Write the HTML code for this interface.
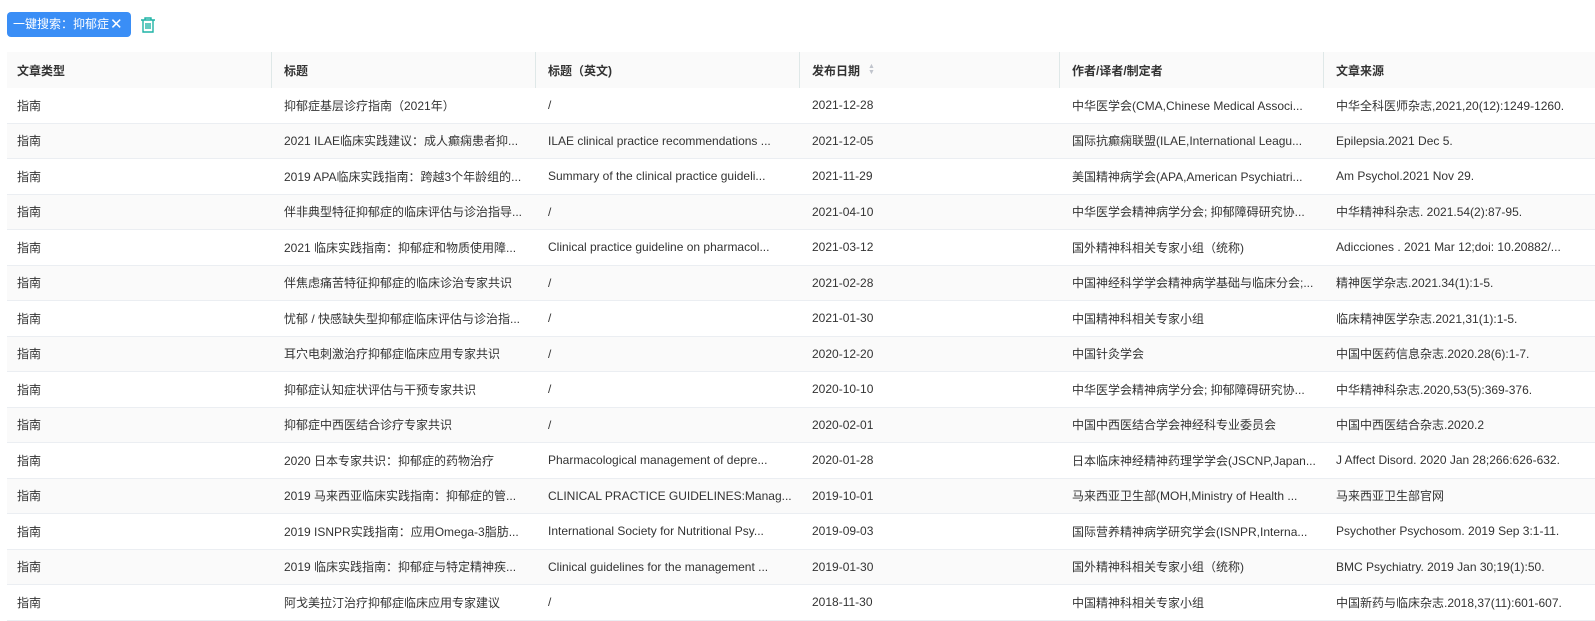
<!DOCTYPE html>
<html><head><meta charset="utf-8"><style>
body{margin:0;background:#fff;font-family:"Liberation Sans","Noto Sans CJK SC",sans-serif;font-size:12px;color:#333;width:1595px;height:621px;overflow:hidden;position:relative}
.tag{position:absolute;left:7px;top:12px;width:124px;height:25px;background:#3a8ef6;border-radius:4px;color:#fff;font-size:12px;line-height:25px;padding-left:6px;box-sizing:border-box}
.tag b{font-weight:normal;font-size:15px;position:absolute;left:103px;top:0}
.trash{position:absolute;left:140px;top:16px}
.tbl{position:absolute;left:7px;top:52px;width:1620px}
.r{display:flex;height:35.5px;box-sizing:border-box;border-bottom:1px solid #ebeef2;align-items:center}
.r:nth-child(odd){background:#fafafa}
.h{height:36px;background:#e8f0f0;border-bottom:none;font-weight:bold;align-items:stretch}
.h>div{border-right:1px solid #dfe8e8;display:flex;align-items:center}
.r>div{box-sizing:border-box;padding-left:12px;white-space:nowrap;overflow:hidden;flex:none}
.r>div:nth-child(1){width:265px;padding-left:10px}
.r>div:nth-child(2){width:264px}
.r>div:nth-child(3){width:264px}
.r>div:nth-child(4){width:260px}
.r>div:nth-child(5){width:264px}
.r>div:nth-child(6){width:303px}
.sort{display:inline-block;vertical-align:middle;margin-left:8px;color:#c0c4cc;font-size:7px;line-height:6px;font-weight:normal}
</style></head><body>
<div class="tag">一键搜索：抑郁症<b>✕</b></div>
<svg class="trash" width="16" height="18" viewBox="0 0 16 18" fill="none" stroke="#1fb3a6" stroke-width="1.4"><path d="M1 4h14M5 4V2h6v2M3 4v12h10V4M6 7v6M8 7v6M10 7v6"/></svg>
<div class="tbl">
<div class="r h"><div>文章类型</div><div>标题</div><div>标题（英文)</div><div>发布日期<span class="sort">▲<br>▼</span></div><div>作者/译者/制定者</div><div>文章来源</div></div>
<div class="r"><div>指南</div><div>抑郁症基层诊疗指南（2021年）</div><div>/</div><div>2021-12-28</div><div>中华医学会(CMA,Chinese Medical Associ...</div><div>中华全科医师杂志,2021,20(12):1249-1260.</div></div>
<div class="r"><div>指南</div><div>2021 ILAE临床实践建议：成人癫痫患者抑...</div><div>ILAE clinical practice recommendations ...</div><div>2021-12-05</div><div>国际抗癫痫联盟(ILAE,International Leagu...</div><div>Epilepsia.2021 Dec 5.</div></div>
<div class="r"><div>指南</div><div>2019 APA临床实践指南：跨越3个年龄组的...</div><div>Summary of the clinical practice guideli...</div><div>2021-11-29</div><div>美国精神病学会(APA,American Psychiatri...</div><div>Am Psychol.2021 Nov 29.</div></div>
<div class="r"><div>指南</div><div>伴非典型特征抑郁症的临床评估与诊治指导...</div><div>/</div><div>2021-04-10</div><div>中华医学会精神病学分会; 抑郁障碍研究协...</div><div>中华精神科杂志. 2021.54(2):87-95.</div></div>
<div class="r"><div>指南</div><div>2021 临床实践指南：抑郁症和物质使用障...</div><div>Clinical practice guideline on pharmacol...</div><div>2021-03-12</div><div>国外精神科相关专家小组（统称)</div><div>Adicciones . 2021 Mar 12;doi: 10.20882/...</div></div>
<div class="r"><div>指南</div><div>伴焦虑痛苦特征抑郁症的临床诊治专家共识</div><div>/</div><div>2021-02-28</div><div>中国神经科学学会精神病学基础与临床分会;...</div><div>精神医学杂志.2021.34(1):1-5.</div></div>
<div class="r"><div>指南</div><div>忧郁 / 快感缺失型抑郁症临床评估与诊治指...</div><div>/</div><div>2021-01-30</div><div>中国精神科相关专家小组</div><div>临床精神医学杂志.2021,31(1):1-5.</div></div>
<div class="r"><div>指南</div><div>耳穴电刺激治疗抑郁症临床应用专家共识</div><div>/</div><div>2020-12-20</div><div>中国针灸学会</div><div>中国中医药信息杂志.2020.28(6):1-7.</div></div>
<div class="r"><div>指南</div><div>抑郁症认知症状评估与干预专家共识</div><div>/</div><div>2020-10-10</div><div>中华医学会精神病学分会; 抑郁障碍研究协...</div><div>中华精神科杂志.2020,53(5):369-376.</div></div>
<div class="r"><div>指南</div><div>抑郁症中西医结合诊疗专家共识</div><div>/</div><div>2020-02-01</div><div>中国中西医结合学会神经科专业委员会</div><div>中国中西医结合杂志.2020.2</div></div>
<div class="r"><div>指南</div><div>2020 日本专家共识：抑郁症的药物治疗</div><div>Pharmacological management of depre...</div><div>2020-01-28</div><div>日本临床神经精神药理学学会(JSCNP,Japan...</div><div>J Affect Disord. 2020 Jan 28;266:626-632.</div></div>
<div class="r"><div>指南</div><div>2019 马来西亚临床实践指南：抑郁症的管...</div><div>CLINICAL PRACTICE GUIDELINES:Manag...</div><div>2019-10-01</div><div>马来西亚卫生部(MOH,Ministry of Health ...</div><div>马来西亚卫生部官网</div></div>
<div class="r"><div>指南</div><div>2019 ISNPR实践指南：应用Omega-3脂肪...</div><div>International Society for Nutritional Psy...</div><div>2019-09-03</div><div>国际营养精神病学研究学会(ISNPR,Interna...</div><div>Psychother Psychosom. 2019 Sep 3:1-11.</div></div>
<div class="r"><div>指南</div><div>2019 临床实践指南：抑郁症与特定精神疾...</div><div>Clinical guidelines for the management ...</div><div>2019-01-30</div><div>国外精神科相关专家小组（统称)</div><div>BMC Psychiatry. 2019 Jan 30;19(1):50.</div></div>
<div class="r"><div>指南</div><div>阿戈美拉汀治疗抑郁症临床应用专家建议</div><div>/</div><div>2018-11-30</div><div>中国精神科相关专家小组</div><div>中国新药与临床杂志.2018,37(11):601-607.</div></div>
</div>
</body></html>
